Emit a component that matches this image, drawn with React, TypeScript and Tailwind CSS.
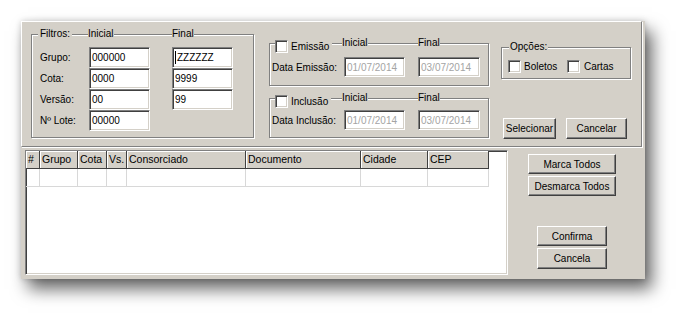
import type { ReactNode } from "react";

const sunken =
  "border border-t-[#808080] border-l-[#808080] border-b-white border-r-white shadow-[inset_1px_1px_0_#404040,inset_-1px_-1px_0_#d4d0c8]";
const raised =
  "border border-t-white border-l-white border-r-[#404040] border-b-[#404040] shadow-[inset_-1px_-1px_0_#808080,inset_1px_1px_0_#d4d0c8]";
const etched =
  "relative border border-[#808080] shadow-[inset_1px_1px_0_#fff,1px_1px_0_#fff]";

const columns = [
  { label: "#", w: "w-[14px]" },
  { label: "Grupo", w: "w-[38px]" },
  { label: "Cota", w: "w-[29px]" },
  { label: "Vs.", w: "w-[20px]" },
  { label: "Consorciado", w: "w-[119px]" },
  { label: "Documento", w: "w-[115px]" },
  { label: "Cidade", w: "w-[67px]" },
  { label: "CEP", w: "w-[61px]" },
];

function Field({
  value,
  w = "w-[61px]",
  h = "h-[21px]",
  disabled,
  caret,
}: {
  value: string;
  w?: string;
  h?: string;
  disabled?: boolean;
  caret?: boolean;
}) {
  return (
    <div
      className={`${w} ${h} ${sunken} flex items-center bg-white pl-[2px] ${
        disabled ? "text-[#a4a4a4]" : "text-black"
      }`}
    >
      {caret && <span className="mr-[1px] h-[13px] w-px bg-black" />}
      {value}
    </div>
  );
}

function Check() {
  return <div className={`h-[13px] w-[13px] shrink-0 bg-white ${sunken}`} />;
}

function Caption({ children, className }: { children: ReactNode; className: string }) {
  return (
    <span className={`absolute top-[-7px] bg-[#d4d0c8] leading-[12px] ${className}`}>
      {children}
    </span>
  );
}

function Btn({ label, className }: { label: string; className: string }) {
  return (
    <button className={`${raised} flex items-center justify-center bg-[#d4d0c8] text-black ${className}`}>
      {label}
    </button>
  );
}

function FilterRow({ label, from, to, caret }: { label: string; from: string; to?: string; caret?: boolean }) {
  return (
    <div className="flex items-center">
      <span className="w-[49px]">{label}</span>
      <Field value={from} />
      {to !== undefined && (
        <div className="ml-[22px]">
          <Field value={to} caret={caret} />
        </div>
      )}
    </div>
  );
}

export default function App() {
  return (
    <div className="h-[322px] w-[688px] overflow-hidden bg-white pl-[21px] pt-[21px] font-[family-name:'Liberation_Sans',Arial,sans-serif] text-[10px] text-black">
      <div className="flex h-[258px] w-[624px] flex-col bg-[#d4d0c8] shadow-[7px_10px_16px_rgba(0,0,0,0.6),0_0_6px_rgba(0,0,0,0.18)]">
        {/* Filtros panel */}
        <div className="flex h-[126px] w-[621px] shrink-0 border border-t-white border-l-white border-r-[#808080] border-b-[#808080] shadow-[1px_1px_0_#fff]">
          <div className={`${etched} ml-[9px] mt-[12px] h-[104px] w-[223px] pl-[8px] pt-[12px]`}>
            <Caption className="left-[6px] px-[2px]">Filtros:</Caption>
            <Caption className="left-[56px]">Inicial</Caption>
            <Caption className="left-[140px]">Final</Caption>
            <FilterRow label="Grupo:" from="000000" to="ZZZZZZ" caret />
            <FilterRow label="Cota:" from="0000" to="9999" />
            <FilterRow label="Versão:" from="00" to="99" />
            <FilterRow label="Nº Lote:" from="00000" />
          </div>

          <div className="ml-[15px] mt-[21px] flex flex-col gap-[12px]">
            <div className={`${etched} h-[43px] w-[220px] pl-[2px] pt-[13px]`}>
              <div className="absolute left-[5px] top-[-4px] flex items-center bg-[#d4d0c8] pr-[3px]">
                <Check />
                <span className="ml-[3px] leading-[12px]">Emissão</span>
              </div>
              <Caption className="left-[72px]">Inicial</Caption>
              <Caption className="left-[148px]">Final</Caption>
              <div className="flex items-center">
                <span className="w-[72px]">Data Emissão:</span>
                <Field value="01/07/2014" h="h-[20px]" disabled />
                <div className="ml-[13px]">
                  <Field value="03/07/2014" w="w-[62px]" h="h-[20px]" disabled />
                </div>
              </div>
            </div>
            <div className={`${etched} h-[40px] w-[220px] pl-[2px] pt-[11px]`}>
              <div className="absolute left-[5px] top-[-4px] flex items-center bg-[#d4d0c8] pr-[3px]">
                <Check />
                <span className="ml-[3px] leading-[12px]">Inclusão</span>
              </div>
              <Caption className="left-[72px]">Inicial</Caption>
              <Caption className="left-[148px]">Final</Caption>
              <div className="flex items-center">
                <span className="w-[72px]">Data Inclusão:</span>
                <Field value="01/07/2014" h="h-[20px]" disabled />
                <div className="ml-[13px]">
                  <Field value="03/07/2014" w="w-[62px]" h="h-[20px]" disabled />
                </div>
              </div>
            </div>
          </div>

          <div className="ml-[12px] mt-[25px] flex flex-col">
            <div className={`${etched} flex h-[32px] w-[130px] items-center pl-[6px] pt-[6px]`}>
              <Caption className="left-[7px] px-[1px]">Opções:</Caption>
              <Check />
              <span className="ml-[3px] w-[43px]">Boletos</span>
              <Check />
              <span className="ml-[4px]">Cartas</span>
            </div>
            <div className="ml-[2px] mt-[39px] flex gap-[10px]">
              <Btn label="Selecionar" className="h-[21px] w-[53px]" />
              <Btn label="Cancelar" className="h-[21px] w-[61px]" />
            </div>
          </div>
        </div>

        {/* Grid area */}
        <div className="flex pl-[4px] pt-[3px]">
          <div className={`h-[125px] w-[483px] bg-white ${sunken}`}>
            <div className="flex">
              {columns.map((c) => (
                <div
                  key={c.label}
                  className={`${c.w} flex h-[18px] shrink-0 items-center border-r border-b border-r-[#404040] border-b-[#404040] bg-[#d4d0c8] pl-[2px] shadow-[inset_1px_1px_0_#fff] text-[10.5px]`}
                >
                  {c.label}
                </div>
              ))}
            </div>
            <div className="flex">
              {columns.map((c) => (
                <div key={c.label} className={`${c.w} h-[18px] shrink-0 border-r border-b border-[#d8d8d8]`} />
              ))}
            </div>
          </div>

          <div className="ml-[20px] mt-[4px] flex flex-col">
            <div className="flex flex-col gap-[2px]">
              <Btn label="Marca Todos" className="h-[20px] w-[88px]" />
              <Btn label="Desmarca Todos" className="h-[20px] w-[88px]" />
            </div>
            <div className="ml-[9px] mt-[30px] flex flex-col gap-[2px]">
              <Btn label="Confirma" className="h-[20px] w-[70px]" />
              <Btn label="Cancela" className="h-[21px] w-[70px]" />
            </div>
          </div>
        </div>
      </div>
    </div>
  );
}
